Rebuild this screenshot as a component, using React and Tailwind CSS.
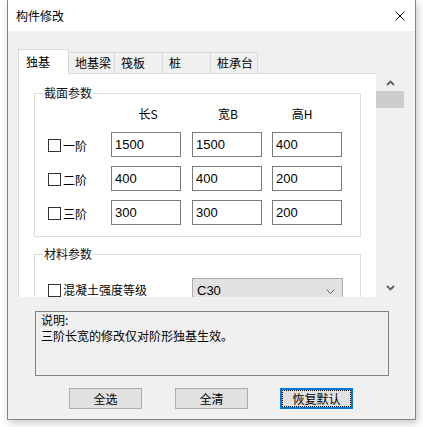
import React from 'react'

const cjk = { fontFamily: '"Noto Sans CJK SC", "Microsoft YaHei", sans-serif' }
const num = { fontFamily: '"Liberation Sans", "Noto Sans", sans-serif' }

const tabs = [
  { label: '地基梁', w: 'w-[46px]' },
  { label: '筏板', w: 'w-[48px]' },
  { label: '桩', w: 'w-[48px]' },
  { label: '桩承台', w: 'w-[47px]' },
]

const rows = [
  { label: '一阶', s: '1500', b: '1500', h: '400' },
  { label: '二阶', s: '400', b: '400', h: '200' },
  { label: '三阶', s: '300', b: '300', h: '200' },
]

export default function App() {
  return (
    <div className="w-[423px] h-[427px] bg-white overflow-hidden" style={cjk}>
      <div className="ml-[7px] w-[409px] h-[420px] border-x border-b border-[#858585] bg-[#f0f0f0] shadow-[2px_3px_8px_rgba(0,0,0,0.22)] flex flex-col">
        {/* Title bar */}
        <div className="h-[31px] bg-white flex items-center justify-between pl-[8px] pr-[10px] shrink-0">
          <span className="text-[12px] leading-[14px] text-black">构件修改</span>
          <svg width="10" height="10" viewBox="0 0 10 10">
            <path d="M0.5 0.5 L9.5 9.5 M9.5 0.5 L0.5 9.5" stroke="#111" strokeWidth="1" />
          </svg>
        </div>

        {/* Body */}
        <div className="pt-[18px] pl-[10px] flex flex-col">
          {/* Tab strip */}
          <div className="flex items-end w-[358px] h-[25px] border-b border-[#d9d9d9]">
            <div className="w-[51px] h-[25px] -mb-px bg-white border-x border-t border-[#d9d9d9] pl-[7px] flex items-center text-[12px] leading-[14px] text-black">
              独基
            </div>
            {tabs.map((t) => (
              <div
                key={t.label}
                className={`${t.w} h-[21px] border-t border-r border-[#d9d9d9] pl-[6px] flex items-center text-[12px] leading-[14px] text-black`}
              >
                {t.label}
              </div>
            ))}
          </div>

          {/* Panel + scrollbar */}
          <div className="flex">
            <div className="w-[358px] h-[223px] bg-white border-l border-[#d9d9d9] overflow-hidden pl-[15px] pt-[19px]">
              {/* 截面参数 */}
              <div className="w-[327px] h-[144px] border border-[#dcdcdc]">
                <div className="-mt-[8px] ml-[8px] px-[1px] w-fit bg-white text-[12px] leading-[14px] text-[#111]">截面参数</div>
                <div className="flex mt-[7px] text-[12px] leading-[14px] text-black">
                  <div className="ml-[78px] w-[70px] text-center">长S</div>
                  <div className="ml-[10px] w-[70px] text-center">宽B</div>
                  <div className="ml-[4px] w-[70px] text-center">高H</div>
                </div>
                <div className="mt-[11px] flex flex-col gap-[9px]">
                  {rows.map((r) => (
                    <div key={r.label} className="flex items-center h-[25px]">
                      <div className="ml-[13px] w-[63px] flex items-center">
                        <span className="w-[13px] h-[13px] border border-[#333] bg-white mt-[2px]" />
                        <span className="ml-[2px] text-[12px] leading-[14px] text-black mt-[2px]">{r.label}</span>
                      </div>
                      <Input value={r.s} />
                      <div className="w-[11px]" />
                      <Input value={r.b} />
                      <div className="w-[10px]" />
                      <Input value={r.h} />
                    </div>
                  ))}
                </div>
              </div>

              {/* 材料参数 */}
              <div className="mt-[17px] w-[327px] h-[90px] border border-[#dcdcdc]">
                <div className="-mt-[8px] ml-[8px] px-[1px] w-fit bg-white text-[12px] leading-[14px] text-[#111]">材料参数</div>
                <div className="mt-[17px] flex items-start">
                  <div className="ml-[13px] w-[144px] flex items-center mt-[5px]">
                    <span className="w-[13px] h-[13px] border border-[#333] bg-white" />
                    <span className="ml-[2px] text-[12px] leading-[14px] text-black">混凝土强度等级</span>
                  </div>
                  <div className="w-[151px] h-[24px] bg-[#e1e1e1] border border-[#adadad] flex items-center justify-between pl-[4px] pr-[7px]">
                    <span className="text-[13px] leading-[15px] text-black mt-[1px]" style={num}>C30</span>
                    <svg width="9" height="5" viewBox="0 0 9 5" className="mt-[3px]">
                      <path d="M0.5 0.5 L4.5 4.5 L8.5 0.5" fill="none" stroke="#606060" strokeWidth="1" />
                    </svg>
                  </div>
                </div>
              </div>
            </div>

            {/* Scrollbar */}
            <div className="w-[28px] h-[223px] flex flex-col items-center">
              <svg width="9" height="6" viewBox="0 0 9 6" className="mt-[6px]">
                <path d="M1 5 L4.5 1.5 L8 5" fill="none" stroke="#606060" strokeWidth="1.8" />
              </svg>
              <div className="mt-[5px] w-[28px] h-[17px] bg-[#cdcdcd]" />
              <div className="flex-1" />
              <svg width="9" height="6" viewBox="0 0 9 6" className="mb-[6px]">
                <path d="M1 1 L4.5 4.5 L8 1" fill="none" stroke="#606060" strokeWidth="1.8" />
              </svg>
            </div>
          </div>

          {/* Description */}
          <div className="mt-[14px] ml-[17px] w-[354px] h-[65px] border border-[#828282] pl-[5px] text-[12px] leading-[16px] text-black">
            <div>说明:</div>
            <div>三阶长宽的修改仅对阶形独基生效。</div>
          </div>

          {/* Buttons */}
          <div className="mt-[12px] flex h-[21px]">
            <Btn className="ml-[51px]">全选</Btn>
            <Btn className="ml-[33px]">全清</Btn>
            <button className="ml-[32px] w-[73px] h-[21px] border-2 border-[#0078d7] bg-[#e1e1e1] p-0">
              <div className="w-full h-full border border-dotted border-black flex items-center justify-center text-[12px] leading-[14px] text-black">
                恢复默认
              </div>
            </button>
          </div>
        </div>
      </div>
    </div>
  )
}

function Input({ value }) {
  return (
    <div className="w-[70px] h-[25px] border border-[#7a7a7a] bg-white flex items-center pl-[3px] text-[13px] leading-[15px] text-black" style={num}>
      {value}
    </div>
  )
}

function Btn({ children, className }) {
  return (
    <button className={`${className} w-[73px] h-[21px] border border-[#adadad] bg-[#e1e1e1] flex items-center justify-center text-[12px] leading-[14px] text-black`}>
      {children}
    </button>
  )
}
